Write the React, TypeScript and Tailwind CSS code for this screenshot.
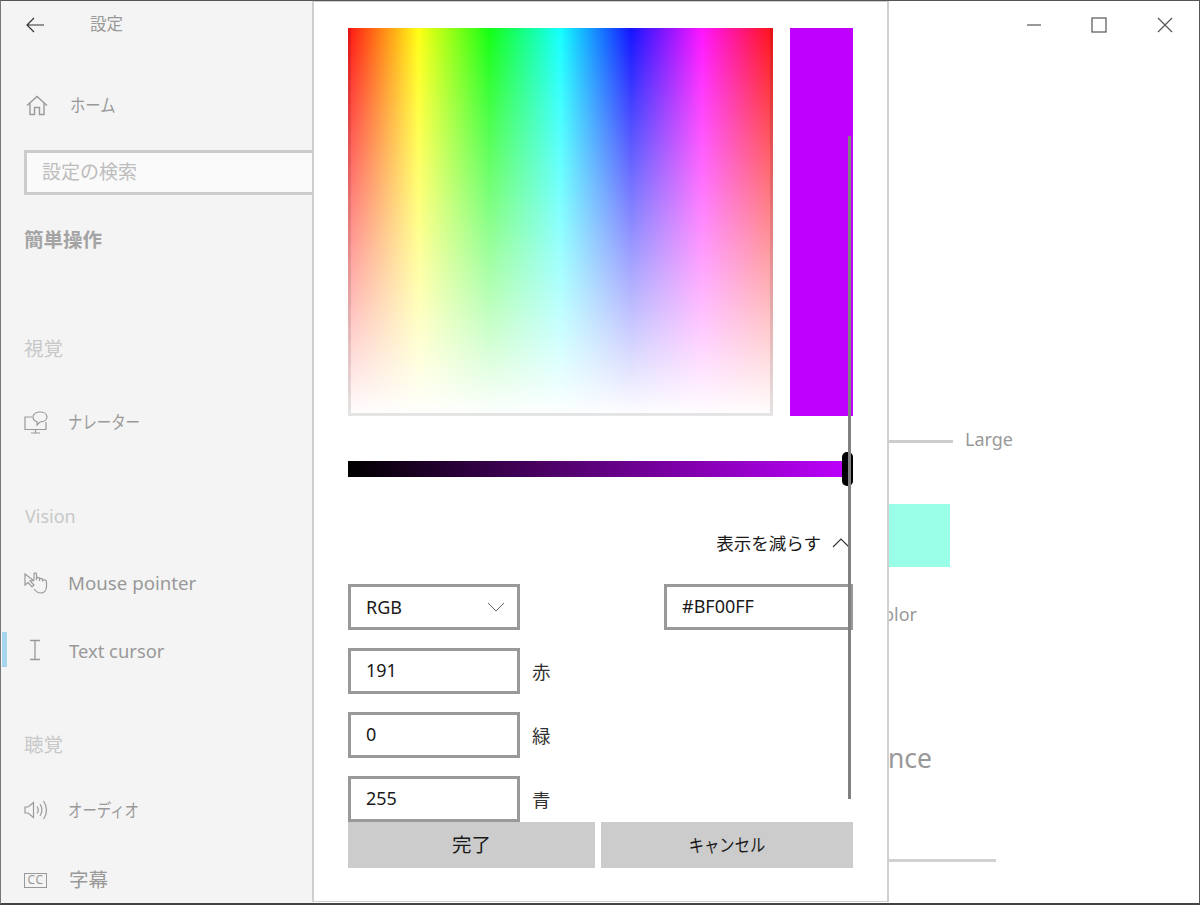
import React from 'react';

// kana in the reference font is much narrower than in Noto Sans CJK
const Kana = ({ children, className = 'origin-left scale-x-[0.8]' }: { children: React.ReactNode; className?: string }) => (
  <span className={`inline-block ${className}`}>{children}</span>
);

const NavRow = ({ icon, label, iconWidth = 45, active = false, className = 'text-[18px]' }: { icon: React.ReactNode; label: React.ReactNode; iconWidth?: number; active?: boolean; className?: string }) => (
  <div className={`relative flex items-center h-12 pl-[23px] text-[#999] ${className}`}>
    {active && <div className="absolute left-[1px] top-[5px] w-[5px] h-[35px] bg-[#a6d5ee]" />}
    <div className="shrink-0 flex items-center" style={{ width: iconWidth }}>{icon}</div>
    <span className="whitespace-nowrap">{label}</span>
  </div>
);

const Heading = ({ children, className = '' }: { children: React.ReactNode; className?: string }) => (
  <div className={`flex items-center h-10 pl-[23px] text-[19.5px] text-[#c8c8c8] ${className}`}>{children}</div>
);

const HomeIcon = () => (
  <svg width="22" height="21" viewBox="0 0 22 21" fill="none" stroke="#999" strokeWidth="1.4" className="ml-[2px]">
    <path d="M1 10.5 L11 1.5 L21 10.5" />
    <path d="M4 8 V19.5 H8.5 V12.5 H13.5 V19.5 H18 V8" />
  </svg>
);

const NarratorIcon = () => (
  <svg width="24" height="23" viewBox="0 0 24 23" fill="none" stroke="#999" strokeWidth="1.2">
    <path d="M8 6 H1 V18.5 H22 V11" />
    <path d="M11.5 18.5 V22 M7 22 H16" />
    <path d="M9 6 C9 3 12 1 16 1 C20 1 23 3 23 6 C23 9 20 11 16 11 L13 14 L13 10.5 C10.5 10 9 8 9 6 Z" />
  </svg>
);

const PointerIcon = () => (
  <svg width="24" height="22" viewBox="0 0 24 22" fill="none" stroke="#999" strokeWidth="1.2">
    <path d="M1 2 V13 L4 10.5 L8 15 L10 13 L6 9 L9.5 8.5 Z" />
    <path d="M10 8 V2.2 C10 0.5 12.5 0.5 12.5 2.2 V8 M12.5 6.5 C13 5 15.5 5 15.5 6.8 V9 M15.5 7.5 C16 6 18.5 6 18.5 8 V9.5 M18.5 8.5 C19.5 7.5 22.5 7.5 22.5 10 V14.5 C22.5 18.5 20 21 16.5 21 C13.5 21 12 19.5 10 17" />
  </svg>
);

const CursorIcon = () => (
  <svg width="12" height="22" viewBox="0 0 12 22" fill="none" stroke="#999" strokeWidth="1.3" className="ml-[5px] -mt-[2px]">
    <path d="M1 1.5 H11 M6 1.5 V20.5 M1 20.5 H11" />
  </svg>
);

const AudioIcon = () => (
  <svg width="24" height="20" viewBox="0 0 24 20" fill="none" stroke="#999" strokeWidth="1.2">
    <path d="M1 7 V13 H4 L9.5 17.5 V2.5 L4 7 Z" />
    <path d="M13 6.5 C14.5 8.5 14.5 11.5 13 13.5" />
    <path d="M16 4 C18.5 7.5 18.5 12.5 16 16" />
    <path d="M19.5 1 C23.5 6.5 23.5 13.5 19.5 19" />
  </svg>
);

const CaptionIcon = () => (
  <div className="flex items-center justify-center w-[23px] h-[15px] border border-[#999] text-[12px] leading-none tracking-[0.5px] text-[#999]">CC</div>
);

const Sidebar = () => (
  <div className="shrink-0 w-[313px] h-full bg-[#f4f4f4]">
    <div className="flex items-center h-[47px] pl-[25px]">
      <svg width="19" height="16" viewBox="0 0 19 16" fill="none" stroke="#333" strokeWidth="1.2">
        <path d="M18 8 H1 M8 1 L1 8 L8 15" />
      </svg>
      <span className="ml-[45px] text-[16.5px] text-[#999]">設定</span>
    </div>
    <div className="mt-[33px]"><NavRow icon={<HomeIcon />} label={<Kana className="origin-left scale-x-[0.85]">ホーム</Kana>} iconWidth={46} /></div>
    <div className="mt-[21px] flex items-center h-[45px] ml-[23px] pl-[15px] border-[3px] border-r-0 border-[#ccc] bg-[#fafafa] text-[19px] text-[#bdbdbd]">設定の検索</div>
    <div className="flex items-center h-10 mt-[25px] pl-[23px] text-[19.5px] font-bold text-[#a3a3a3]">簡単操作</div>
    <Heading className="mt-[69px]">視覚</Heading>
    <div className="mt-[29px]"><NavRow icon={<NarratorIcon />} label={<Kana>ナレーター</Kana>} iconWidth={44} /></div>
    <Heading className="mt-[50px]"><span className="ml-px text-[18px]">Vision</span></Heading>
    <div className="mt-[23px]"><NavRow icon={<PointerIcon />} label="Mouse pointer" iconWidth={44} className="text-[18.7px]" /></div>
    <div className="mt-[20px]"><NavRow icon={<CursorIcon />} label="Text cursor" active className="text-[18.4px]" /></div>
    <Heading className="mt-[50px]">聴覚</Heading>
    <div className="mt-[21px]"><NavRow icon={<AudioIcon />} label={<Kana>オーディオ</Kana>} iconWidth={44} /></div>
    <div className="mt-[22px]"><NavRow icon={<CaptionIcon />} label="字幕" className="text-[19.5px]" /></div>
  </div>
);

const WindowControls = () => (
  <div className="flex justify-end h-12 pr-[2px]">
    <div className="flex items-center justify-center w-[65px] pr-[2px]">
      <svg width="16" height="16" viewBox="0 0 16 16" stroke="#555" strokeWidth="1.2"><path d="M1 8 H15" /></svg>
    </div>
    <div className="flex items-center justify-center w-[65px] pr-[1px]">
      <svg width="16" height="16" viewBox="0 0 16 16" fill="none" stroke="#555" strokeWidth="1.2"><rect x="1" y="1" width="14" height="14" /></svg>
    </div>
    <div className="flex items-center justify-center w-[65px]">
      <svg width="16" height="16" viewBox="0 0 16 16" fill="none" stroke="#555" strokeWidth="1.2"><path d="M1 1 L15 15 M15 1 L1 15" /></svg>
    </div>
  </div>
);

const PageBehind = () => (
  <div className="flex-1 h-full">
    <WindowControls />
    <div className="flex items-center h-[30px] mt-[377px] ml-[26px] text-[18px] text-[#999]">
      <div className="w-[613px] h-[3px] bg-[#ccc]" />
      <span className="ml-3 pb-[3px]">Large</span>
    </div>
    <div className="w-[62px] h-[63px] mt-[48px] ml-[574px] bg-[#99ffe6]" />
    <div className="w-[603px] h-[30px] mt-[32px] leading-[30px] text-right text-[18px] text-[#999]">custom color</div>
    <div className="w-[618px] h-10 mt-[109px] leading-10 text-right text-[26.5px] text-[#999]">appearance</div>
    <div className="w-[656px] h-[3px] mt-[81px] ml-[26px] bg-[#d2d2d2]" />
  </div>
);

const ValueBox = ({ value, className = 'w-[172px]' }: { value: string; className?: string }) => (
  <div className={`flex items-center h-[46px] pl-[15px] pb-[2px] border-[3px] border-[#999] text-[18px] text-[#1a1a1a] ${className}`}>{value}</div>
);

const channels = [
  { value: '191', label: '赤' },
  { value: '0', label: '緑' },
  { value: '255', label: '青' },
];

const ColorPicker = () => (
  <div className="absolute left-[311px] top-0 w-[577px] h-[901px] px-[34px] pt-[26px] bg-white border-x-2 border-t border-b border-[#cfcfcf]">
    <div className="flex gap-[17px] h-[388px]">
      <div className="w-[425px] border-[3px] border-t-0 border-black/10 bg-origin-border bg-[linear-gradient(to_bottom,rgba(255,255,255,0.08),#fff),linear-gradient(to_right,#f00,#ff0_16.6%,#0f0_33.3%,#0ff_50%,#00f_66.6%,#f0f_83.3%,#f00)]" />
      <div className="w-[63px] bg-[#bf00ff]" />
    </div>

    <div className="relative h-4 mt-[45px] bg-[linear-gradient(to_right,#000,#bf00ff)]">
      <div className="absolute right-0 top-[-9px] w-[11px] h-[34px] rounded-[5px] bg-black" />
    </div>

    <div className="flex items-center justify-end h-[30px] mt-[52px] text-[17.5px] text-[#1a1a1a]">
      <span className="pb-[1px]">表示を減らす</span>
      <svg width="18" height="12" viewBox="0 0 18 12" fill="none" stroke="#333" strokeWidth="1.1" className="ml-[11px] mr-[3px] -mt-[3px]">
        <path d="M1 10 L9 2 L17 10" />
      </svg>
    </div>

    <div className="flex justify-between mt-[25px]">
      <div className="flex items-center justify-between w-[172px] h-[46px] pl-[15px] pr-[12px] border-[3px] border-[#999] text-[18px] text-[#1a1a1a]">
        <span>RGB</span>
        <svg width="18" height="10" viewBox="0 0 18 10" fill="none" stroke="#666" strokeWidth="1"><path d="M1 1 L9 9 L17 1" /></svg>
      </div>
      <ValueBox value="#BF00FF" className="w-[189px]" />
    </div>

    {channels.map((c) => (
      <div key={c.label} className="flex items-center mt-[18px]">
        <ValueBox value={c.value} />
        <span className="ml-3 pt-[1px] text-[18.5px] text-[#333]">{c.label}</span>
      </div>
    ))}

    <div className="flex gap-[6px]">
      <button className="w-[247px] h-[46px] bg-[#ccc] text-[19.5px] text-[#1a1a1a]">完了</button>
      <button className="w-[252px] h-[46px] bg-[#ccc] text-[18px] text-[#1a1a1a]">
        <Kana className="origin-center scale-x-[0.85]">キャンセル</Kana>
      </button>
    </div>

    {/* scrollbar sits on top of the form */}
    <div className="absolute left-[534px] top-[134px] w-[3px] h-[663px] bg-[#808080]" />
  </div>
);

export default function App() {
  return (
    <div className="relative flex w-[1200px] h-[905px] overflow-hidden bg-white border-t border-l border-r border-b-2 border-t-[#555] border-l-[#777] border-r-[#555] border-b-[#444] font-['Noto_Sans','Noto_Sans_CJK_JP',sans-serif]">
      <Sidebar />
      <PageBehind />
      <ColorPicker />
    </div>
  );
}
